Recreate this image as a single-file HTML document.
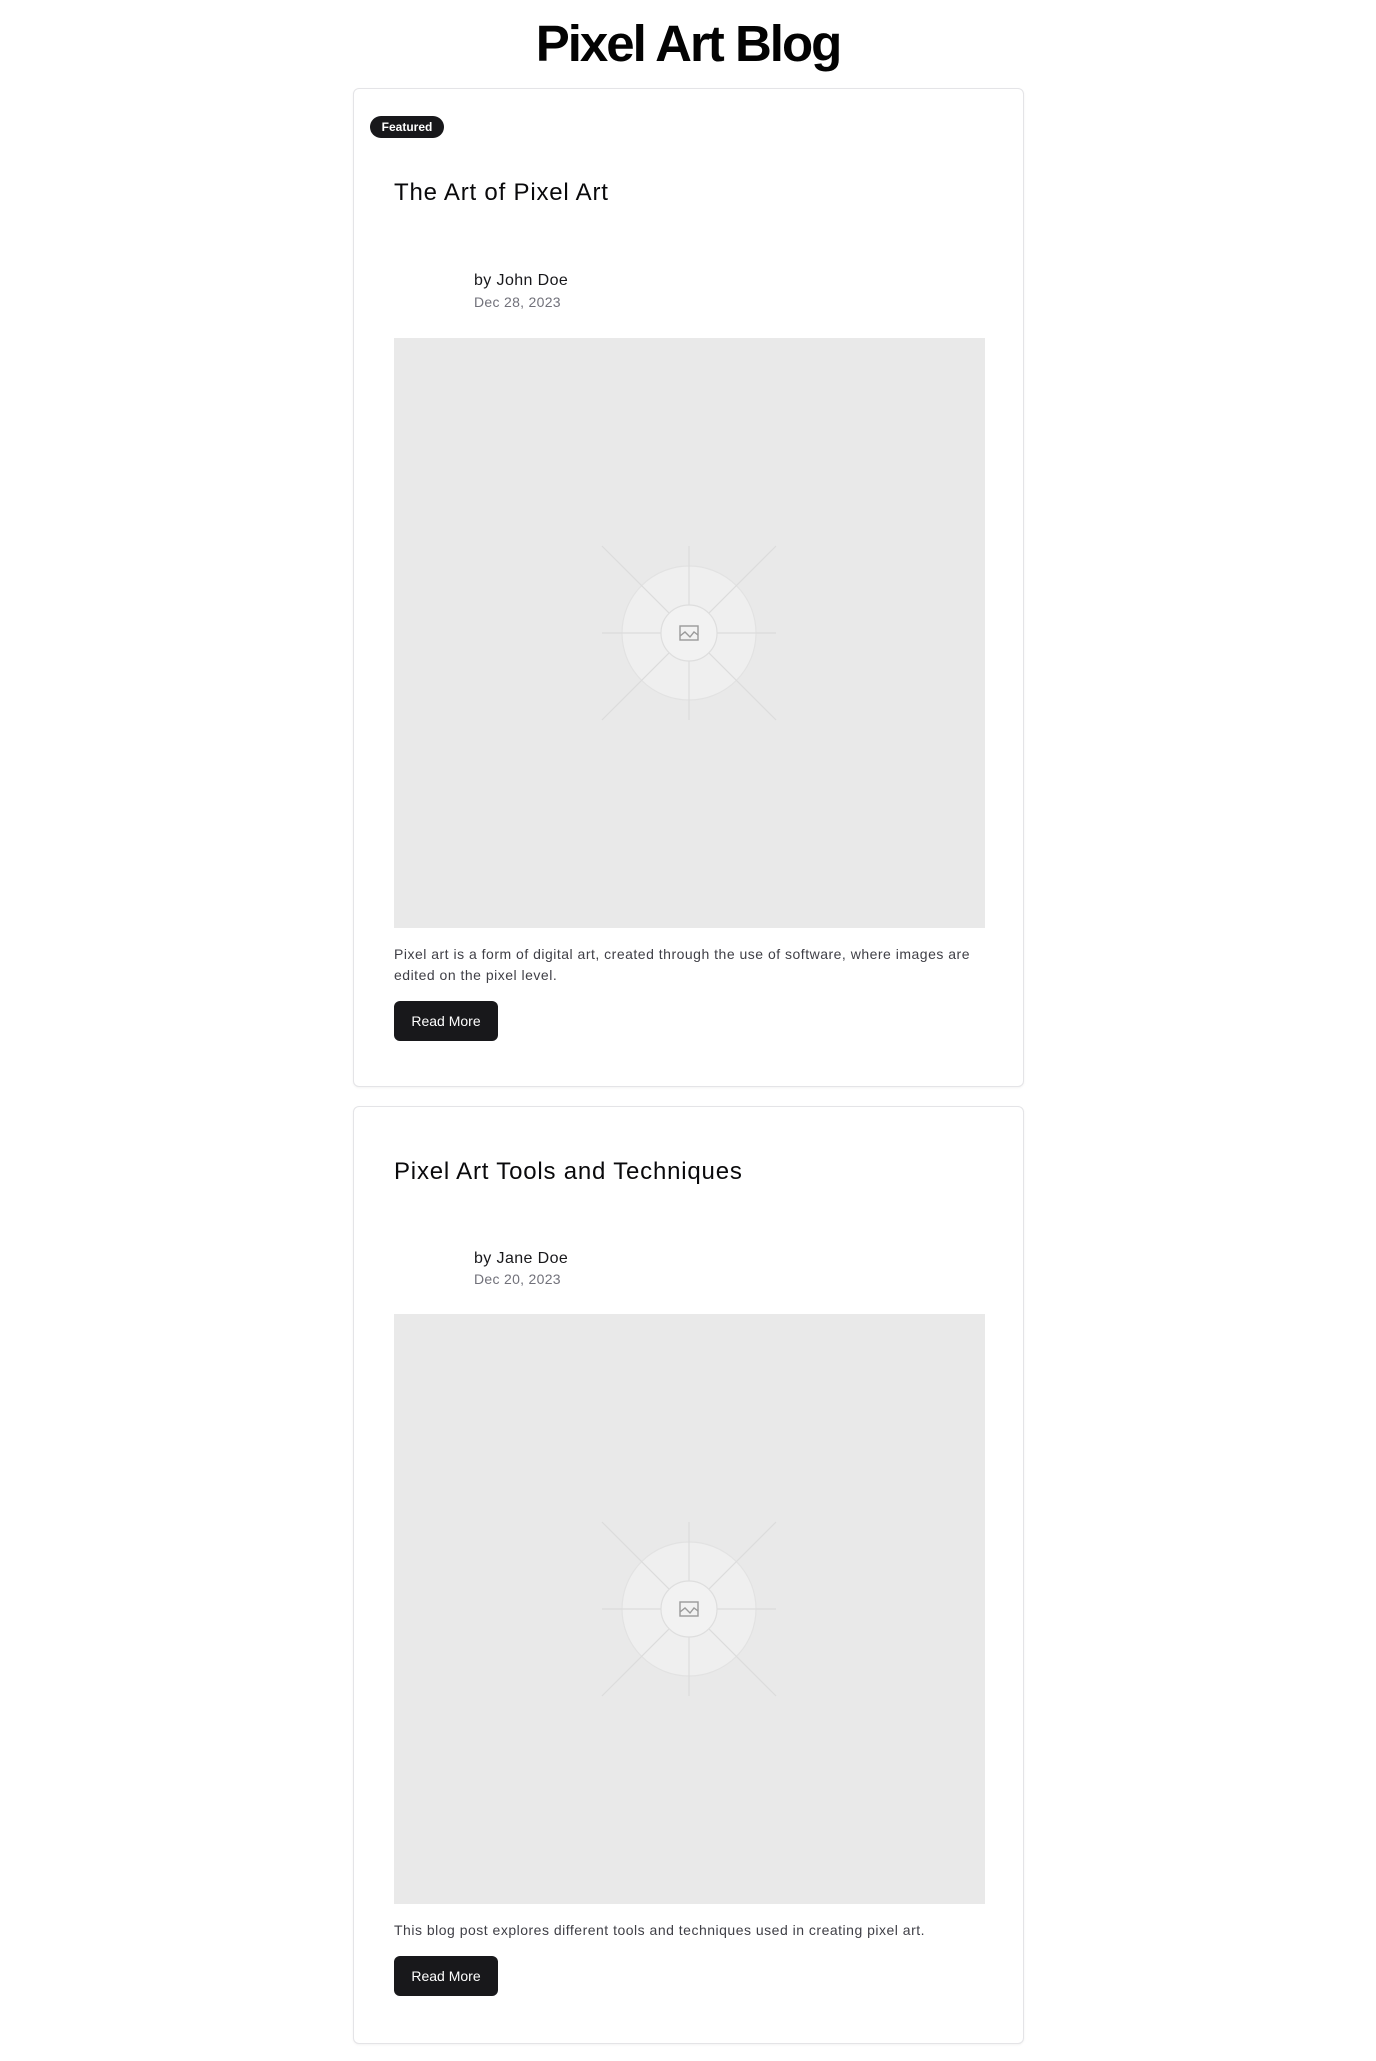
<!DOCTYPE html>
<html><head><meta charset="utf-8"><style>
*{margin:0;padding:0;box-sizing:border-box}
body{width:1376px;height:2061px;background:#fff;font-family:"Liberation Sans",sans-serif;position:relative;overflow:hidden;color:#09090b}
.abs{position:absolute;white-space:nowrap}
h1{position:absolute;left:0;width:1376px;top:18px;text-align:center;font-size:51px;line-height:51px;font-weight:700;letter-spacing:-2px;color:#030303}
.card{position:absolute;left:353px;width:671px;border:1px solid #e4e4e7;border-radius:6px;background:#fff;box-shadow:0 1px 2px rgba(0,0,0,.05)}
.badge{left:16px;top:27px;width:74px;height:22px;border-radius:11px;background:#18181b;color:#fff;font-size:12px;font-weight:700;line-height:22px;text-align:center}
.title{left:40px;font-size:24px;line-height:24px;color:#09090b;letter-spacing:0.8px}
.by{left:120px;font-size:16px;line-height:16px;color:#18181b;letter-spacing:0.4px}
.date{left:120px;font-size:14px;line-height:14px;color:#71717a;letter-spacing:0.3px}
.img{left:40px;width:591px;height:590px;background:#e9e9e9}
.desc{left:40px;width:591px;font-size:14px;line-height:21px;color:#3f3f46;white-space:normal;letter-spacing:0.5px}
.btn{left:40px;width:104px;height:40px;border-radius:6px;background:#18181b;color:#fff;font-size:14px;line-height:40px;text-align:center}
</style></head><body>
<h1>Pixel Art Blog</h1>

<div class="card" style="top:88px;height:999px">
<div class="abs badge">Featured</div>
<div class="abs title" style="top:92px">The Art of Pixel Art</div>
<div class="abs by" style="top:184px">by John Doe</div>
<div class="abs date" style="top:206px">Dec 28, 2023</div>
<div class="abs img" style="top:249px">
<svg width="591" height="590" viewBox="0 0 591 590"><g stroke="#dcdcdc" stroke-width="1.2" fill="none">
<circle cx="295" cy="295" r="67" fill="#efefef" stroke="#e2e2e2"/>
<line x1="295" y1="208" x2="295" y2="382"/><line x1="208" y1="295" x2="382" y2="295"/>
<line x1="208" y1="208" x2="382" y2="382"/><line x1="382" y1="208" x2="208" y2="382"/>
<circle cx="295" cy="295" r="28" fill="#f2f2f2" stroke="#dedede"/>
</g><g stroke="#9a9a9a" stroke-width="1.4" fill="none"><rect x="286" y="288" width="18" height="14"/><path d="M286 298 L291 294 L296 299 L300 294 L304 297"/></g></svg>
</div>
<div class="abs desc" style="top:855px">Pixel art is a form of digital art, created through the use of software, where images are edited on the pixel level.</div>
<div class="abs btn" style="top:912px">Read More</div>
</div>

<div class="card" style="top:1106px;height:938px">
<div class="abs title" style="top:53px">Pixel Art Tools and Techniques</div>
<div class="abs by" style="top:144px">by Jane Doe</div>
<div class="abs date" style="top:165px">Dec 20, 2023</div>
<div class="abs img" style="top:207px">
<svg width="591" height="590" viewBox="0 0 591 590"><g stroke="#dcdcdc" stroke-width="1.2" fill="none">
<circle cx="295" cy="295" r="67" fill="#efefef" stroke="#e2e2e2"/>
<line x1="295" y1="208" x2="295" y2="382"/><line x1="208" y1="295" x2="382" y2="295"/>
<line x1="208" y1="208" x2="382" y2="382"/><line x1="382" y1="208" x2="208" y2="382"/>
<circle cx="295" cy="295" r="28" fill="#f2f2f2" stroke="#dedede"/>
</g><g stroke="#9a9a9a" stroke-width="1.4" fill="none"><rect x="286" y="288" width="18" height="14"/><path d="M286 298 L291 294 L296 299 L300 294 L304 297"/></g></svg>
</div>
<div class="abs desc" style="top:813px">This blog post explores different tools and techniques used in creating pixel art.</div>
<div class="abs btn" style="top:849px">Read More</div>
</div>
</body></html>
